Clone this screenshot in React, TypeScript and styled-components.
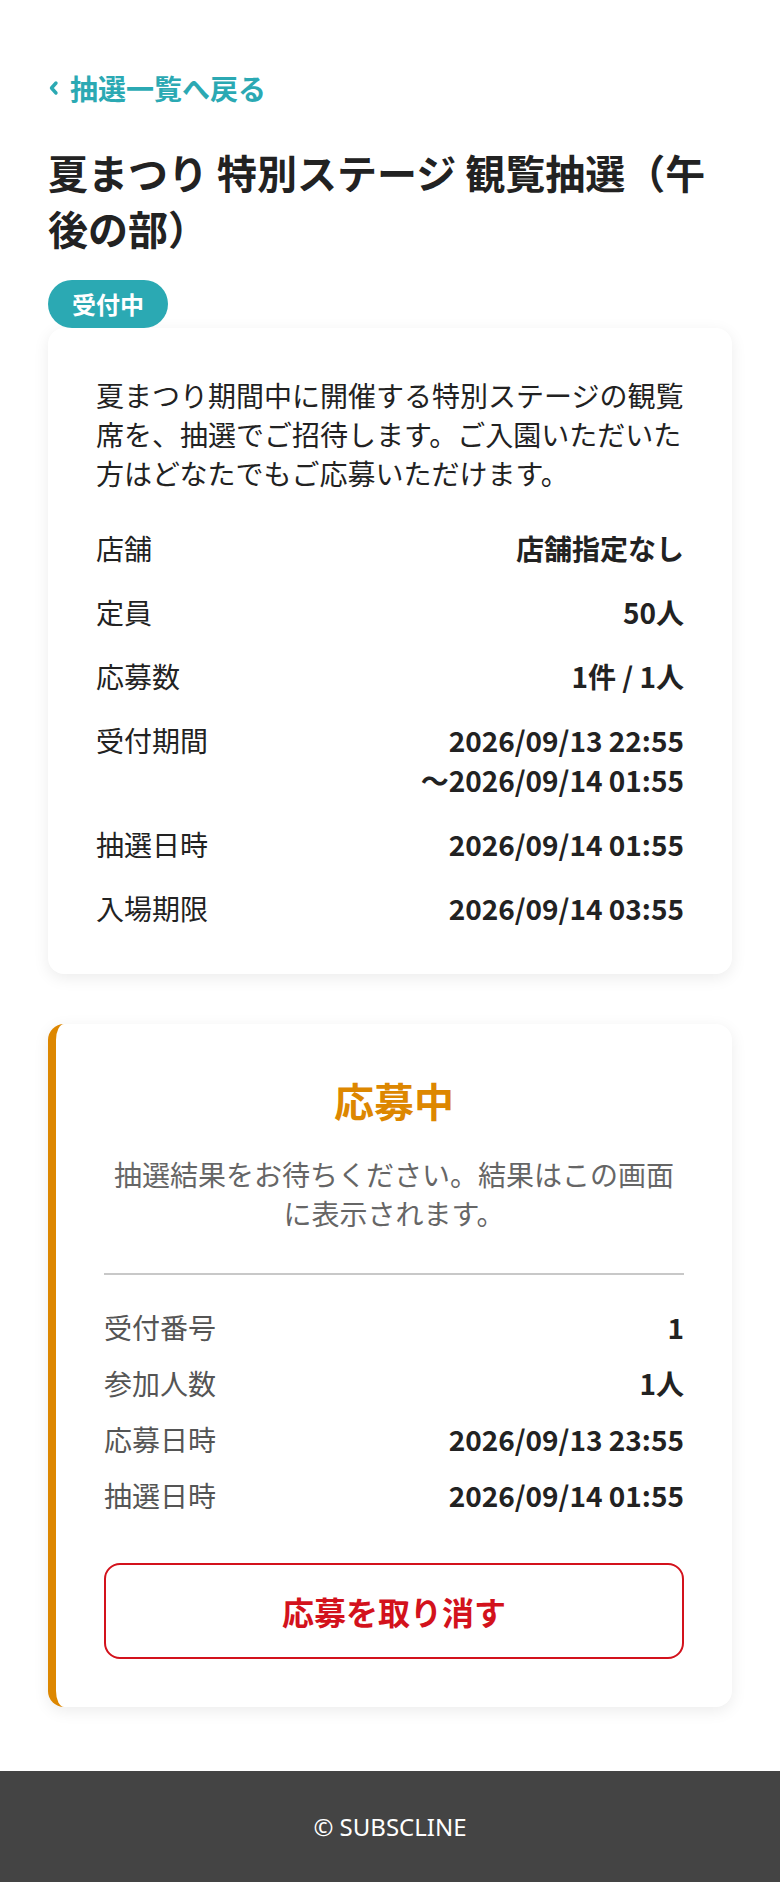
import React from 'react';
import styled, { createGlobalStyle } from 'styled-components';

const teal = '#2ba9b3';
const orange = '#dd8700';
const red = '#d3121c';

const GlobalStyle = createGlobalStyle`
  * { box-sizing: border-box; }
  body {
    margin: 0;
    background: #fff;
    color: #222;
    font-family: "Noto Sans CJK JP", "Noto Sans", sans-serif;
  }
`;

const Page = styled.div`
  display: flex;
  flex-direction: column;
  min-height: 100vh;
`;

const Main = styled.main`
  flex: 1;
  padding: 64px 48px 64px;
`;

const BackLink = styled.a`
  display: inline-flex;
  align-items: center;
  gap: 11px;
  color: ${teal};
  font-size: 28px;
  font-weight: 700;
  line-height: 48px;
  text-decoration: none;
`;

const Title = styled.h1`
  margin: 32px 0 24px;
  font-size: 40px;
  font-weight: 700;
  line-height: 1.4;
  color: #222;
`;

const Badge = styled.span`
  display: inline-block;
  padding: 6px 24px;
  border-radius: 999px;
  background: ${teal};
  color: #fff;
  font-size: 24px;
  font-weight: 700;
  line-height: 36px;
  vertical-align: top;
`;

const Card = styled.section<{ $accent?: string }>`
  background: #fff;
  border-radius: 16px;
  box-shadow: 0 4px 16px rgba(0, 0, 0, 0.08);
  padding: ${(p) => (p.$accent ? '48px' : '48px 48px 46px')};
  border-left: ${(p) => (p.$accent ? `8px solid ${p.$accent}` : 'none')};

  & + & {
    margin-top: 50px;
  }
`;

const Description = styled.p`
  margin: 0 0 34px;
  font-size: 28px;
  line-height: 1.4;
`;

const InfoList = styled.dl<{ $gap: number }>`
  display: flex;
  flex-direction: column;
  gap: ${(p) => p.$gap}px;
  margin: 0;
`;

const InfoRow = styled.div`
  display: flex;
  justify-content: space-between;
  align-items: flex-start;
  font-size: 28px;
  line-height: 40px;
`;

const Label = styled.dt<{ $muted?: boolean }>`
  color: ${(p) => (p.$muted ? '#555' : '#222')};
`;

const Value = styled.dd`
  margin: 0;
  font-weight: 700;
  text-align: right;
  color: #222;
`;

const StatusTitle = styled.h2`
  margin: 0 0 27px;
  text-align: center;
  color: ${orange};
  font-size: 40px;
  font-weight: 700;
  line-height: 1.4;
`;

const StatusNote = styled.p`
  margin: 0;
  text-align: center;
  color: #666;
  font-size: 28px;
  line-height: 1.4;
`;

const Divider = styled.hr`
  margin: 40px 0 32px;
  border: 0;
  height: 2px;
  background: #c8c8c8;
`;

const CancelButton = styled.button`
  display: block;
  width: 100%;
  height: 96px;
  margin-top: 48px;
  border: 2px solid ${red};
  border-radius: 16px;
  background: #fff;
  color: ${red};
  font-family: inherit;
  font-size: 32px;
  font-weight: 700;
  cursor: pointer;
`;

const Footer = styled.footer`
  background: #444;
  color: #fff;
  text-align: center;
  padding: 38px 0 39px;
  font-family: "Noto Sans", sans-serif;
  font-size: 24px;
  line-height: 36px;
`;

const ChevronLeft = () => (
  <svg width="11" height="16" viewBox="0 0 11 16" aria-hidden="true">
    <path d="M8 3 L3.5 8 L8 13" fill="none" stroke="currentColor" strokeWidth="3.4" strokeLinecap="round" strokeLinejoin="round" />
  </svg>
);

const lotteryInfo: { label: string; value: string[] }[] = [
  { label: '店舗', value: ['店舗指定なし'] },
  { label: '定員', value: ['50人'] },
  { label: '応募数', value: ['1件 / 1人'] },
  { label: '受付期間', value: ['2026/09/13 22:55', '〜2026/09/14 01:55'] },
  { label: '抽選日時', value: ['2026/09/14 01:55'] },
  { label: '入場期限', value: ['2026/09/14 03:55'] },
];

const entryInfo = [
  { label: '受付番号', value: '1' },
  { label: '参加人数', value: '1人' },
  { label: '応募日時', value: '2026/09/13 23:55' },
  { label: '抽選日時', value: '2026/09/14 01:55' },
];

export default function App() {
  return (
    <Page>
      <GlobalStyle />
      <Main>
        <BackLink href="#">
          <ChevronLeft />
          抽選一覧へ戻る
        </BackLink>
        <Title>夏まつり 特別ステージ 観覧抽選（午後の部）</Title>
        <Badge>受付中</Badge>

        <Card>
          <Description>
            夏まつり期間中に開催する特別ステージの観覧席を、抽選でご招待します。ご入園いただいた方はどなたでもご応募いただけます。
          </Description>
          <InfoList $gap={24}>
            {lotteryInfo.map((row) => (
              <InfoRow key={row.label}>
                <Label>{row.label}</Label>
                <Value>
                  {row.value.map((line, i) => (
                    <div key={i}>{line}</div>
                  ))}
                </Value>
              </InfoRow>
            ))}
          </InfoList>
        </Card>

        <Card $accent={orange}>
          <StatusTitle>応募中</StatusTitle>
          <StatusNote>抽選結果をお待ちください。結果はこの画面に表示されます。</StatusNote>
          <Divider />
          <InfoList $gap={16}>
            {entryInfo.map((row) => (
              <InfoRow key={row.label}>
                <Label $muted>{row.label}</Label>
                <Value>{row.value}</Value>
              </InfoRow>
            ))}
          </InfoList>
          <CancelButton type="button">応募を取り消す</CancelButton>
        </Card>
      </Main>
      <Footer>© SUBSCLINE</Footer>
    </Page>
  );
}
